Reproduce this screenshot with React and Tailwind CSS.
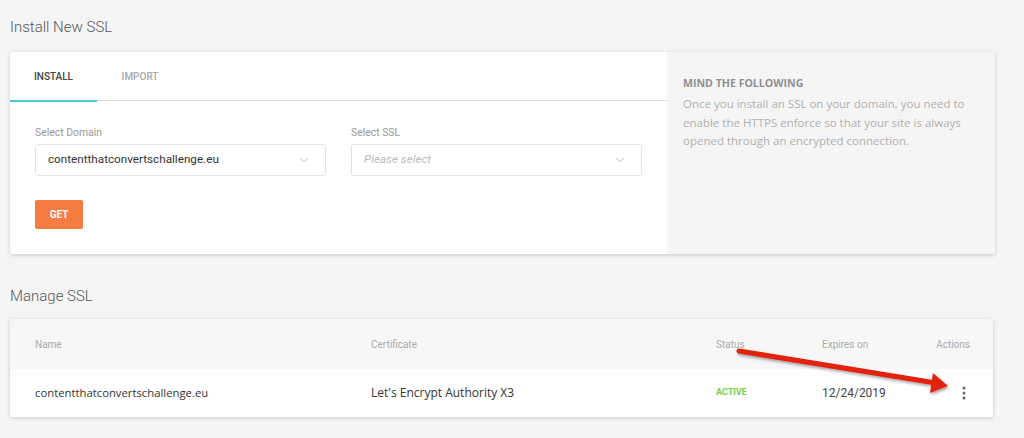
import { ChevronDown } from "lucide-react";

function Select({ value, placeholder }) {
  return (
    <div className="flex h-[32px] items-center justify-between rounded-[3px] border border-[#e3e3e3] bg-white pl-[12px] pr-[14px]">
      {value ? (
        <span className="text-[11.7px] text-[#333]">{value}</span>
      ) : (
        <span className="text-[11.7px] italic text-[#bbb]">{placeholder}</span>
      )}
      <ChevronDown className="h-[14px] w-[14px] text-[#aaa]" strokeWidth={1.5} />
    </div>
  );
}

export default function App() {
  return (
    <div className="relative min-h-[438px] w-[1024px] bg-[#f5f5f5] font-['Roboto',sans-serif]">
      <div className="pl-[10px] pr-[29px] pt-[17px]">
        <h2 className="text-[15px] font-light leading-[20px] text-[#555]">Install New SSL</h2>

        <div className="mt-[15px] flex h-[202px] rounded-[2px] bg-white shadow-[0_1px_4px_rgba(0,0,0,0.18)]">
          <div className="w-[657px] shrink-0">
            <div className="flex h-[49px] border-b border-[#dedede]">
              <div className="relative flex w-[87px] items-center justify-center">
                <span className="text-[10px] font-medium uppercase text-[#444]">Install</span>
                <div className="absolute bottom-[-2px] left-0 right-0 h-[2px] bg-[#4ec4dd]" />
              </div>
              <div className="flex w-[86px] items-center justify-center">
                <span className="text-[10px] font-medium uppercase text-[#aaa]">Import</span>
              </div>
            </div>

            <div className="px-[25px] pt-[25px]">
              <div className="grid grid-cols-2 gap-[25px]">
                <div>
                  <div className="mb-[5px] text-[10.4px] leading-[13px] text-[#999]">Select Domain</div>
                  <Select value="contentthatconvertschallenge.eu" />
                </div>
                <div>
                  <div className="mb-[5px] text-[10.4px] leading-[13px] text-[#999]">Select SSL</div>
                  <Select placeholder="Please select" />
                </div>
              </div>
              <button className="mt-[24px] flex h-[29px] w-[48px] items-center justify-center rounded-[2px] bg-[#f47b42] text-[10px] font-bold text-white">
                GET
              </button>
            </div>
          </div>

          <div className="flex-1 bg-[#f5f5f5] px-[16px] pt-[24px]">
            <div className="text-[10.6px] font-bold uppercase leading-[14px] text-[#909090] font-['Open_Sans',sans-serif]">
              Mind the following
            </div>
            <p className="mt-[5px] text-[11.5px] leading-[18.5px] text-[#b0b0b0] font-['Open_Sans',sans-serif]">
              Once you install an SSL on your domain, you need to enable the HTTPS enforce so that your site is always opened through an encrypted connection.
            </p>
          </div>
        </div>

        <h2 className="mt-[32px] text-[15px] font-light leading-[20px] text-[#555]">Manage SSL</h2>

        <div className="mt-[13px] w-[983px] overflow-hidden rounded-[2px] bg-white shadow-[0_1px_4px_rgba(0,0,0,0.18)]">
          <div className="grid h-[50px] grid-cols-[336px_345px_106px_1fr_auto] items-center bg-[#f7f7f7] pl-[25px] pr-[23px] text-[10px] text-[#aaa]">
            <span>Name</span>
            <span>Certificate</span>
            <span>Status</span>
            <span>Expires on</span>
            <span>Actions</span>
          </div>
          <div className="grid h-[48px] grid-cols-[336px_345px_106px_1fr_auto] items-center pl-[25px] pr-[23px] text-[#333]">
            <span className="font-['Open_Sans',sans-serif] text-[11.3px]">contentthatconvertschallenge.eu</span>
            <span className="font-['Open_Sans',sans-serif] text-[12px]">Let's Encrypt Authority X3</span>
            <span className="text-[9px] font-bold text-[#74cf4f]">ACTIVE</span>
            <span className="text-[12px] text-[#444]">12/24/2019</span>
            <span className="flex w-[34px] justify-end pr-[4px]">
              <svg width="4" height="14" viewBox="0 0 4 14">
                <circle cx="2" cy="2" r="1.5" fill="#666" />
                <circle cx="2" cy="7" r="1.5" fill="#666" />
                <circle cx="2" cy="12" r="1.5" fill="#666" />
              </svg>
            </span>
          </div>
        </div>
      </div>

      <svg className="pointer-events-none absolute left-0 top-0" width="1024" height="438">
        <defs>
          <filter id="sh" x="-10%" y="-50%" width="120%" height="200%">
            <feDropShadow dx="1" dy="2" stdDeviation="1.5" floodColor="#000" floodOpacity="0.35" />
          </filter>
        </defs>
        <g filter="url(#sh)">
          <line x1="739" y1="351" x2="936" y2="383" stroke="#e3200d" strokeWidth="5" strokeLinecap="round" />
          <polygon points="933,373 948,386 930,393" fill="#e3200d" />
        </g>
      </svg>
    </div>
  );
}
